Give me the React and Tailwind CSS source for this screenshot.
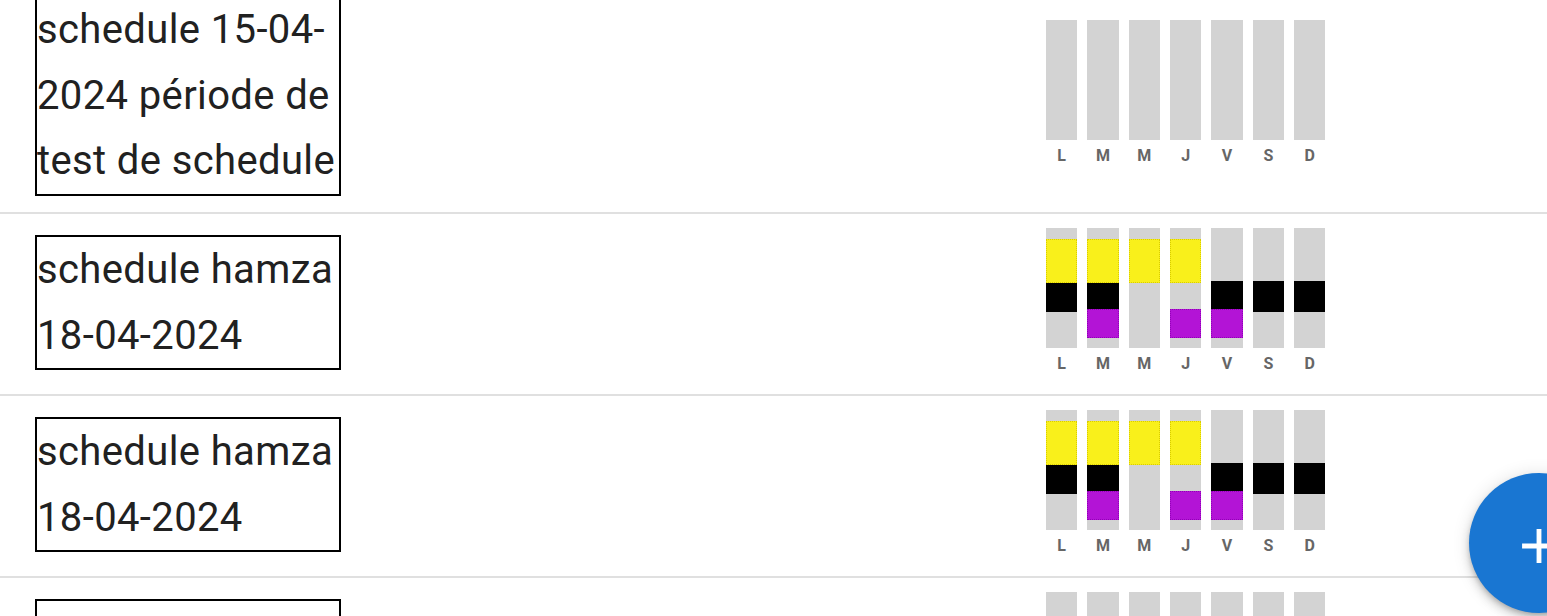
import React from "react";

const DAYS = ["L", "M", "M", "J", "V", "S", "D"];

const Y = "yellow";
const K = "black";
const P = "purple";

const hamza = [
  [[Y, 11, 44], [K, 55, 29]],
  [[Y, 11, 44], [K, 55, 29], [P, 81, 29]],
  [[Y, 11, 44]],
  [[Y, 11, 44], [P, 81, 29]],
  [[K, 53, 31], [P, 81, 29]],
  [[K, 53, 31]],
  [[K, 53, 31]],
];

const empty = [[], [], [], [], [], [], []];

const rows = [
  { name: "schedule 15-04-2024 période de test de schedule", data: empty },
  { name: "schedule hamza 18-04-2024", data: hamza },
  { name: "schedule hamza 18-04-2024", data: hamza },
  { name: "schedule hamza 18-04-2024", data: empty },
];

function Segment({ kind, top, height }) {
  const cls =
    kind === Y
      ? "absolute inset-x-0 bg-[#f9f01b] border border-dotted border-[#d9cc00]"
      : kind === P
      ? "absolute inset-x-0 bg-[#b314d6] border border-dotted border-[#9300b8]"
      : "absolute inset-x-0 bg-black";
  return <div className={cls} style={{ top, height }} />;
}

function WeekChart({ data }) {
  return (
    <div className="flex h-[150px] shrink-0">
      {DAYS.map((d, i) => (
        <div key={i} className="flex w-[41.33px] flex-col items-center">
          <div className="relative h-[120px] w-[31.33px] bg-[#d3d3d3]">
            {data[i]
              .filter((s) => s[0] !== P)
              .concat(data[i].filter((s) => s[0] === P))
              .map((s, j) => (
                <Segment key={j} kind={s[0]} top={s[1]} height={s[2]} />
              ))}
          </div>
          <div className="h-[30px] text-[16px] font-bold leading-[32px] text-[#666666]">
            {d}
          </div>
        </div>
      ))}
    </div>
  );
}

export default function App() {
  return (
    <div
      className="relative h-[616px] w-[1547px] overflow-hidden bg-white"
      style={{ fontFamily: "Roboto, 'Noto Sans', sans-serif" }}
    >
      <div className="-mt-[19px] flex flex-col">
        {rows.map((r, i) => (
          <div
            key={i}
            className="flex items-center border-b-2 border-[#e0e0e0] pb-[16px] pt-[14px]"
          >
            <div className="w-[1041px] shrink-0 pl-[35px]">
              <div className="w-[306px] border-2 border-black text-[40px] leading-[65.5px] tracking-[0.00938em] text-[#212121]">
                {r.name}
              </div>
            </div>
            <WeekChart data={r.data} />
          </div>
        ))}
      </div>

      <button className="absolute left-[1469px] top-[473px] flex h-[140px] w-[140px] items-center justify-center rounded-full bg-[#1976d2] pt-[6px] shadow-[0_3px_5px_-1px_rgba(0,0,0,0.2),0_6px_10px_0_rgba(0,0,0,0.14),0_1px_18px_0_rgba(0,0,0,0.12)]">
        <svg width="58" height="58" viewBox="0 0 24 24" fill="white">
          <path d="M19 13h-6v6h-2v-6H5v-2h6V5h2v6h6v2z" />
        </svg>
      </button>
    </div>
  );
}
